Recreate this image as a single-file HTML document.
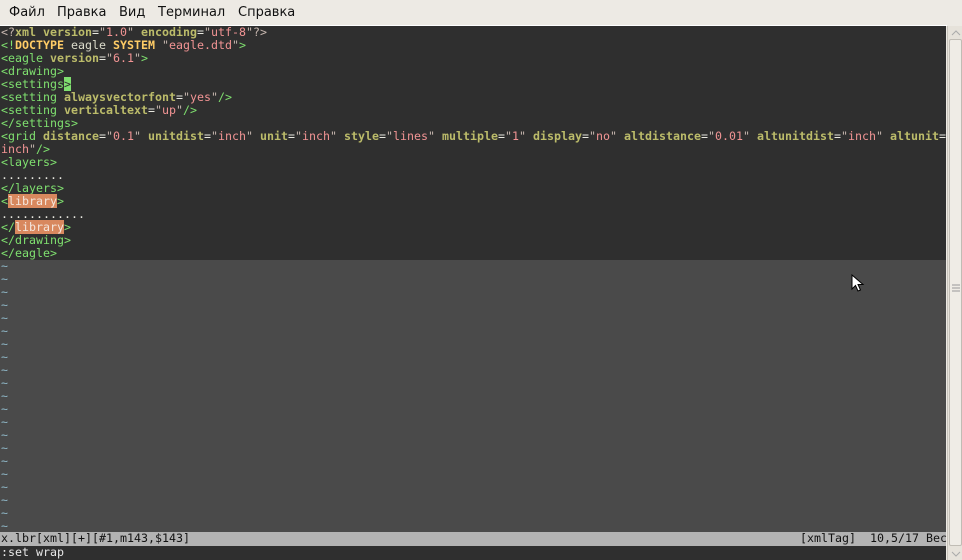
<!DOCTYPE html>
<html><head><meta charset="utf-8"><style>
*{margin:0;padding:0;box-sizing:border-box}
html,body{width:962px;height:560px;overflow:hidden;background:#edeae4}
.menu{position:absolute;left:0;top:0;width:962px;height:25px;background:#edeae4;font:13px "DejaVu Sans","Liberation Sans",sans-serif;color:#111}
.menu span{position:absolute;top:5px}
.sep{position:absolute;left:0;top:25px;width:947px;height:1px;background:#fff}
.term{position:absolute;left:0;top:26px;width:946px;height:534px;background:#4a4a4a}
.top{position:absolute;left:0;top:0;width:946px;height:234px;background:#2f2f2f}
pre{position:absolute;left:1px;font:11.63px/13px "DejaVu Sans Mono","Liberation Mono",monospace;color:#dcdccc;white-space:pre}
.g{color:#7fe06f}.a{color:#bcbc6a;font-weight:bold}.s{color:#f29494}.q{color:#c8b8b0}.d{color:#ffcc66;font-weight:bold}.w{color:#e8e8e0}
.hl{background:#d8885e;color:#f4e6dc}.cur{background:#7fe06f;color:#2f2f2f}
.t{color:#8fb8c8}
.status{position:absolute;left:0;top:506px;width:946px;height:14px;background:#b3b3b3}
.cmd{position:absolute;left:0;top:520px;width:946px;height:14px;background:#2f2f2f}
.sb{position:absolute;left:947px;top:26px;width:15px;height:534px;background:#e6e2da;border-left:1px solid #c8c4bc}
.thumb{position:absolute;left:1px;top:13px;width:13px;height:507px;background:#efece6;border:1px solid #c0bcb4;border-radius:2px}
</style></head><body>
<div class="menu"><span style="left:9px">Файл</span><span style="left:57px">Правка</span><span style="left:119px">Вид</span><span style="left:158px">Терминал</span><span style="left:238px">Справка</span></div>
<div class="sep"></div>
<div class="term">
<div class="top"></div>
<pre style="top:0"><span class="q">&lt;?</span><span class="a">xml</span> <span class="a">version</span><span class="w">=</span><span class="q">"</span><span class="s">1.0</span><span class="q">"</span> <span class="a">encoding</span><span class="w">=</span><span class="q">"</span><span class="s">utf-8</span><span class="q">"?&gt;</span>
<span class="g">&lt;!</span><span class="d">DOCTYPE</span> eagle <span class="d">SYSTEM</span> <span class="q">"</span><span class="s">eagle.dtd</span><span class="q">"</span><span class="g">&gt;</span>
<span class="g">&lt;eagle</span> <span class="a">version</span><span class="w">=</span><span class="q">"</span><span class="s">6.1</span><span class="q">"</span><span class="g">&gt;</span>
<span class="g">&lt;drawing&gt;</span>
<span class="g">&lt;settings</span><span class="cur">&gt;</span>
<span class="g">&lt;setting</span> <span class="a">alwaysvectorfont</span><span class="w">=</span><span class="q">"</span><span class="s">yes</span><span class="q">"</span><span class="g">/&gt;</span>
<span class="g">&lt;setting</span> <span class="a">verticaltext</span><span class="w">=</span><span class="q">"</span><span class="s">up</span><span class="q">"</span><span class="g">/&gt;</span>
<span class="g">&lt;/settings&gt;</span>
<span class="g">&lt;grid</span> <span class="a">distance</span><span class="w">=</span><span class="q">"</span><span class="s">0.1</span><span class="q">"</span> <span class="a">unitdist</span><span class="w">=</span><span class="q">"</span><span class="s">inch</span><span class="q">"</span> <span class="a">unit</span><span class="w">=</span><span class="q">"</span><span class="s">inch</span><span class="q">"</span> <span class="a">style</span><span class="w">=</span><span class="q">"</span><span class="s">lines</span><span class="q">"</span> <span class="a">multiple</span><span class="w">=</span><span class="q">"</span><span class="s">1</span><span class="q">"</span> <span class="a">display</span><span class="w">=</span><span class="q">"</span><span class="s">no</span><span class="q">"</span> <span class="a">altdistance</span><span class="w">=</span><span class="q">"</span><span class="s">0.01</span><span class="q">"</span> <span class="a">altunitdist</span><span class="w">=</span><span class="q">"</span><span class="s">inch</span><span class="q">"</span> <span class="a">altunit</span><span class="w">=</span>
<span class="s">inch</span><span class="q">"</span><span class="g">/&gt;</span>
<span class="g">&lt;layers&gt;</span>
<span class="w">.........</span>
<span class="g">&lt;/layers&gt;</span>
<span class="g">&lt;</span><span class="hl">library</span><span class="g">&gt;</span>
<span class="w">............</span>
<span class="g">&lt;/</span><span class="hl">library</span><span class="g">&gt;</span>
<span class="g">&lt;/drawing&gt;</span>
<span class="g">&lt;/eagle&gt;</span>
<span class="t">~
~
~
~
~
~
~
~
~
~
~
~
~
~
~
~
~
~
~
~
~</span></pre>
<div class="status"></div>
<pre style="top:506px;color:#111;left:1px">x.lbr[xml][+][#1,m143,$143]</pre>
<pre style="top:506px;color:#111;left:800px">[xmlTag]  10,5/17 Bec</pre>
<div class="cmd"></div>
<pre style="top:520px;color:#e8e8e8">:set wrap</pre>
</div>
<div class="sb"><div class="thumb"></div>
<svg style="position:absolute;left:3px;top:4px" width="10" height="6"><path d="M1 5 L5 1 L9 5" fill="none" stroke="#aaa"/></svg>
<svg style="position:absolute;left:4px;top:258px" width="8" height="8"><path d="M0 1H8M0 4H8M0 7H8" stroke="#999"/></svg>
<svg style="position:absolute;left:3px;top:525px" width="10" height="6"><path d="M1 1 L5 5 L9 1" fill="none" stroke="#aaa"/></svg>
</div>
<svg style="position:absolute;left:851px;top:274px" width="14" height="20"><path d="M1 1 L1 15 L4.5 11.5 L7 17 L9.5 16 L7 10.5 L12 10.5 Z" fill="#fff" stroke="#000" stroke-width="1"/></svg>
</body></html>
